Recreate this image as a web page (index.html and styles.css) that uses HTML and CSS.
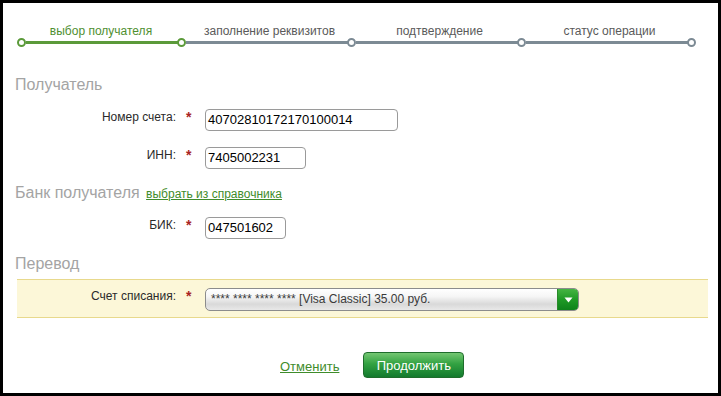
FILE: index.html
```html
<!DOCTYPE html>
<html lang="ru">
<head>
<meta charset="utf-8">
<title>Перевод</title>
<link rel="stylesheet" href="styles.css">
</head>
<body>
<div class="frame">
  <div class="steps">
    <div class="step done">
      <div class="step-label">выбор получателя</div>
      <div class="track"><span class="dot on"></span><span class="line on"></span></div>
    </div>
    <div class="step">
      <div class="step-label shift">заполнение реквизитов</div>
      <div class="track"><span class="dot on"></span><span class="line"></span></div>
    </div>
    <div class="step">
      <div class="step-label shift">подтверждение</div>
      <div class="track"><span class="dot"></span><span class="line"></span></div>
    </div>
    <div class="step">
      <div class="step-label shift">статус операции</div>
      <div class="track"><span class="dot"></span><span class="line"></span></div>
    </div>
    <div class="step">
      <div class="step-label"></div>
      <div class="track"><span class="dot"></span></div>
    </div>
  </div>

  <h2 class="section s1">Получатель</h2>
  <div class="row r1">
    <span class="label">Номер счета:</span><span class="req">*</span>
    <div class="input w-acc">40702810172170100014</div>
  </div>
  <div class="row r2">
    <span class="label">ИНН:</span><span class="req">*</span>
    <div class="input w-inn">7405002231</div>
  </div>

  <h2 class="section s2">Банк получателя <a class="link small" href="#">выбрать из справочника</a></h2>
  <div class="row r3">
    <span class="label">БИК:</span><span class="req">*</span>
    <div class="input w-bik">047501602</div>
  </div>

  <h2 class="section s3">Перевод</h2>
  <div class="band">
    <div class="row">
      <span class="label">Счет списания:</span><span class="req">*</span>
      <div class="select">
        <span class="select-text">**** **** **** **** [Visa Classic] 35.00 руб.</span>
        <span class="select-btn"><svg width="9" height="6" viewBox="0 0 9 6"><path d="M0.5 0.5 L8.5 0.5 L4.5 5.5 Z" fill="#fff"/></svg></span>
      </div>
    </div>
  </div>

  <div class="actions">
    <a class="link cancel" href="#">Отменить</a>
    <button class="btn" type="button">Продолжить</button>
  </div>
</div>
</body>
</html>
```

FILE: styles.css
```css
* { box-sizing: border-box; }
html, body { margin: 0; padding: 0; }
body {
  background: #000;
  font-family: "Liberation Sans", Arial, sans-serif;
  color: #222;
}
.frame {
  width: 721px;
  height: 396px;
  border: 3px solid #000;
  background: #fff;
  overflow: hidden;
}

/* steps */
.steps {
  display: grid;
  grid-template-columns: 160px 170px 170px 170px 0;
  margin: 21px 0 0 18px;
}
.step-label {
  height: 14px;
  line-height: 14px;
  font-size: 12px;
  color: #5a5a5a;
  text-align: center;
  white-space: nowrap;
}
.step.done .step-label { color: #4f8f30; }
.step-label.shift { padding-left: 7px; }
.track {
  display: flex;
  align-items: center;
  height: 8px;
}
.dot {
  flex: none;
  width: 9px;
  height: 9px;
  margin-left: -4.5px;
  border: 2px solid #7c8a94;
  border-radius: 50%;
  background: #fff;
}
.dot.on { border-color: #5b9a3a; }
.line {
  flex: 1;
  height: 3px;
  background: #7c8a94;
}
.line.on { background: #5b9a3a; }

/* section headings */
.section {
  margin: 0;
  padding-left: 12px;
  font-size: 16px;
  line-height: 20px;
  font-weight: normal;
  color: #a4a4a4;
  height: 20px;
}
.s1 { margin-top: 29px; }
.s2 { margin-top: 14px; }
.s3 { margin-top: 15px; }

.link {
  color: #3f8c2b;
  text-decoration: underline;
}
.link.small { font-size: 12px; margin-left: 2px; }

/* rows */
.row {
  display: flex;
  align-items: flex-start;
  height: 22px;
}
.r1 { margin-top: 14px; }
.r2 { margin-top: 16px; }
.r3 { margin-top: 14px; }
.label {
  width: 173px;
  text-align: right;
  font-size: 12px;
  line-height: 17px;
  color: #2a2a2a;
  white-space: nowrap;
}
.req {
  width: 29px;
  padding-left: 10px;
  font-size: 14px;
  font-weight: bold;
  line-height: 16px;
  color: #a82323;
}
.input {
  height: 22px;
  border: 1px solid #9a9a9a;
  border-radius: 4px;
  padding: 0 2px;
  font-size: 13px;
  line-height: 20px;
  color: #000;
  background: #fff;
}
.w-acc { width: 193px; }
.w-inn { width: 101px; }
.w-bik { width: 81px; }

/* band */
.band {
  margin: 5px 10px 0 14px;
  background: #fcf7d8;
  border-top: 1px solid #e8d98c;
  border-bottom: 1px solid #e8d98c;
  padding: 8px 0 6px;
}
.band .row { height: 23px; }
.band .label { width: 159px; }
.select {
  display: flex;
  width: 374px;
  height: 23px;
  border: 1px solid #8c8c8c;
  border-radius: 5px;
  overflow: hidden;
  background: linear-gradient(to bottom, #ffffff 0%, #f6f6f6 35%, #d9d9d9 72%, #e8e8e8 100%);
}
.select-text {
  flex: 1;
  padding-left: 5px;
  font-size: 12px;
  line-height: 21px;
  color: #3a3a3a;
  white-space: nowrap;
}
.select-btn {
  flex: none;
  width: 21px;
  display: flex;
  align-items: center;
  justify-content: center;
  background: linear-gradient(to bottom, #45b443 0%, #1f9a26 50%, #0e821b 100%);
  border-left: 1px solid #2a8a2a;
}

/* actions */
.actions {
  display: flex;
  align-items: center;
  margin-top: 34px;
  padding-left: 277px;
  height: 26px;
}
.cancel {
  font-size: 13px;
  margin-top: 3px;
}
.btn {
  margin-left: 24px;
  width: 101px;
  height: 26px;
  border: 1px solid #1f6d2c;
  border-radius: 4px;
  background: linear-gradient(to bottom, #74c772 0%, #33a242 45%, #137a2e 100%);
  color: #fff;
  font-family: "Liberation Sans", Arial, sans-serif;
  font-size: 13px;
  padding: 0;
}
```
